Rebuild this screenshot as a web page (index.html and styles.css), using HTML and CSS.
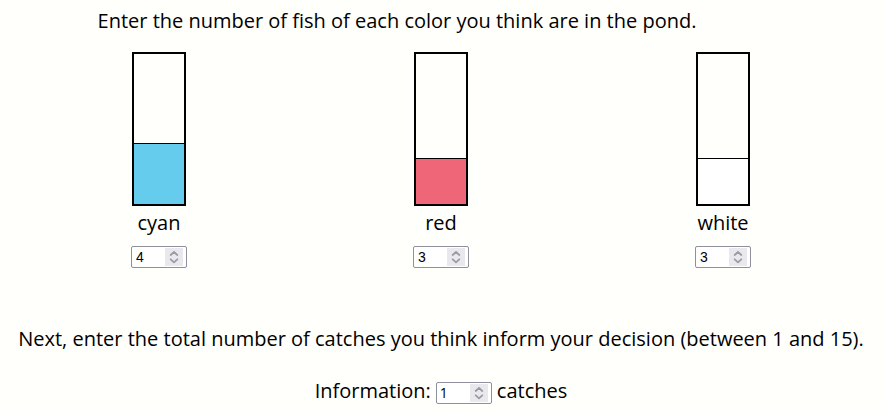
FILE: index.html
```html
<!DOCTYPE html>
<html lang="en">
<head>
<meta charset="utf-8">
<title>Fish in the pond</title>
<link rel="stylesheet" href="styles.css">
</head>
<body>
<form class="page">
  <p class="prompt">Enter the number of fish of each color you think are in the pond.</p>
  <div class="bars">
    <div class="bar">
      <div class="tank"><div class="fill cyan" style="height: 40%"></div></div>
      <label class="name" for="cyan">cyan</label>
      <span class="number">
        <input id="cyan" type="number" min="0" max="10" value="4">
        <svg class="spinner" viewBox="0 0 18 18" aria-hidden="true"><path d="M5.700 7 9 4 12.300 7M5.700 11.300 9 14.300 12.300 11.300"/></svg>
      </span>
    </div>
    <div class="bar">
      <div class="tank"><div class="fill red" style="height: 30%"></div></div>
      <label class="name" for="red">red</label>
      <span class="number">
        <input id="red" type="number" min="0" max="10" value="3">
        <svg class="spinner" viewBox="0 0 18 18" aria-hidden="true"><path d="M5.700 7 9 4 12.300 7M5.700 11.300 9 14.300 12.300 11.300"/></svg>
      </span>
    </div>
    <div class="bar">
      <div class="tank"><div class="fill white" style="height: 30%"></div></div>
      <label class="name" for="white">white</label>
      <span class="number">
        <input id="white" type="number" min="0" max="10" value="3">
        <svg class="spinner" viewBox="0 0 18 18" aria-hidden="true"><path d="M5.700 7 9 4 12.300 7M5.700 11.300 9 14.300 12.300 11.300"/></svg>
      </span>
    </div>
  </div>
  <p class="next">Next, enter the total number of catches you think inform your decision (between 1 and 15).</p>
  <div class="information">
    <label for="catches">Information:</label>
    <span class="number plain">
      <input id="catches" type="number" min="1" max="15" value="1">
      <svg class="spinner" viewBox="0 0 18 18" aria-hidden="true"><path d="M5.700 7 9 4 12.300 7M5.700 11.300 9 14.300 12.300 11.300"/></svg>
    </span>
    <span>catches</span>
  </div>
</form>
</body>
</html>
```
FILE: styles.css
```css
* {
  box-sizing: border-box;
}

body {
  margin: 0;
  background: #fffffb;
  color: #000;
  font: 20px/28px "Open Sans", sans-serif;
}

.page {
  padding: 7px 20px 8px 18px;
  text-align: center;
}

p {
  margin: 0;
}

.prompt {
  padding-right: 88px;
}

.bars {
  display: grid;
  grid-template-columns: repeat(3, 1fr);
  margin-top: 17px;
}

.bar {
  display: flex;
  flex-direction: column;
  align-items: center;
}

.tank {
  display: flex;
  align-items: flex-end;
  width: 54px;
  height: 154px;
  border: 2px solid #000;
}

.fill {
  width: 100%;
  border-top: 1px solid #000;
  box-sizing: content-box;
}

.cyan {
  background: #66ccee;
}

.red {
  background: #ee6677;
}

.white {
  background: #fff;
}

.name {
  margin-top: 3px;
}

.number {
  position: relative;
  display: block;
  width: 56px;
  height: 22px;
}

.bar .number {
  margin-top: 9px;
}

.number input {
  display: block;
  width: 100%;
  height: 100%;
  margin: 0;
  padding: 0 22px 0 4px;
  border: 1px solid #8f8f9d;
  border-radius: 2px;
  background: #fff;
  color: #000;
  font: 14px "Liberation Sans", sans-serif;
  appearance: textfield;
}

.plain input {
  padding-left: 3px;
  font-family: "Open Sans", sans-serif;
}

.number input::-webkit-inner-spin-button {
  appearance: none;
  margin: 0;
}

.spinner {
  position: absolute;
  top: 2px;
  right: 4px;
  width: 18px;
  height: 18px;
  background: #e9e9ed;
  fill: none;
  stroke: #9b9ba6;
  stroke-width: 1.8;
  stroke-linecap: round;
  stroke-linejoin: round;
  pointer-events: none;
}

.next {
  margin-top: 57px;
  white-space: nowrap;
}

.information {
  display: flex;
  justify-content: center;
  align-items: baseline;
  gap: 5px;
  margin-top: 24px;
}
```
